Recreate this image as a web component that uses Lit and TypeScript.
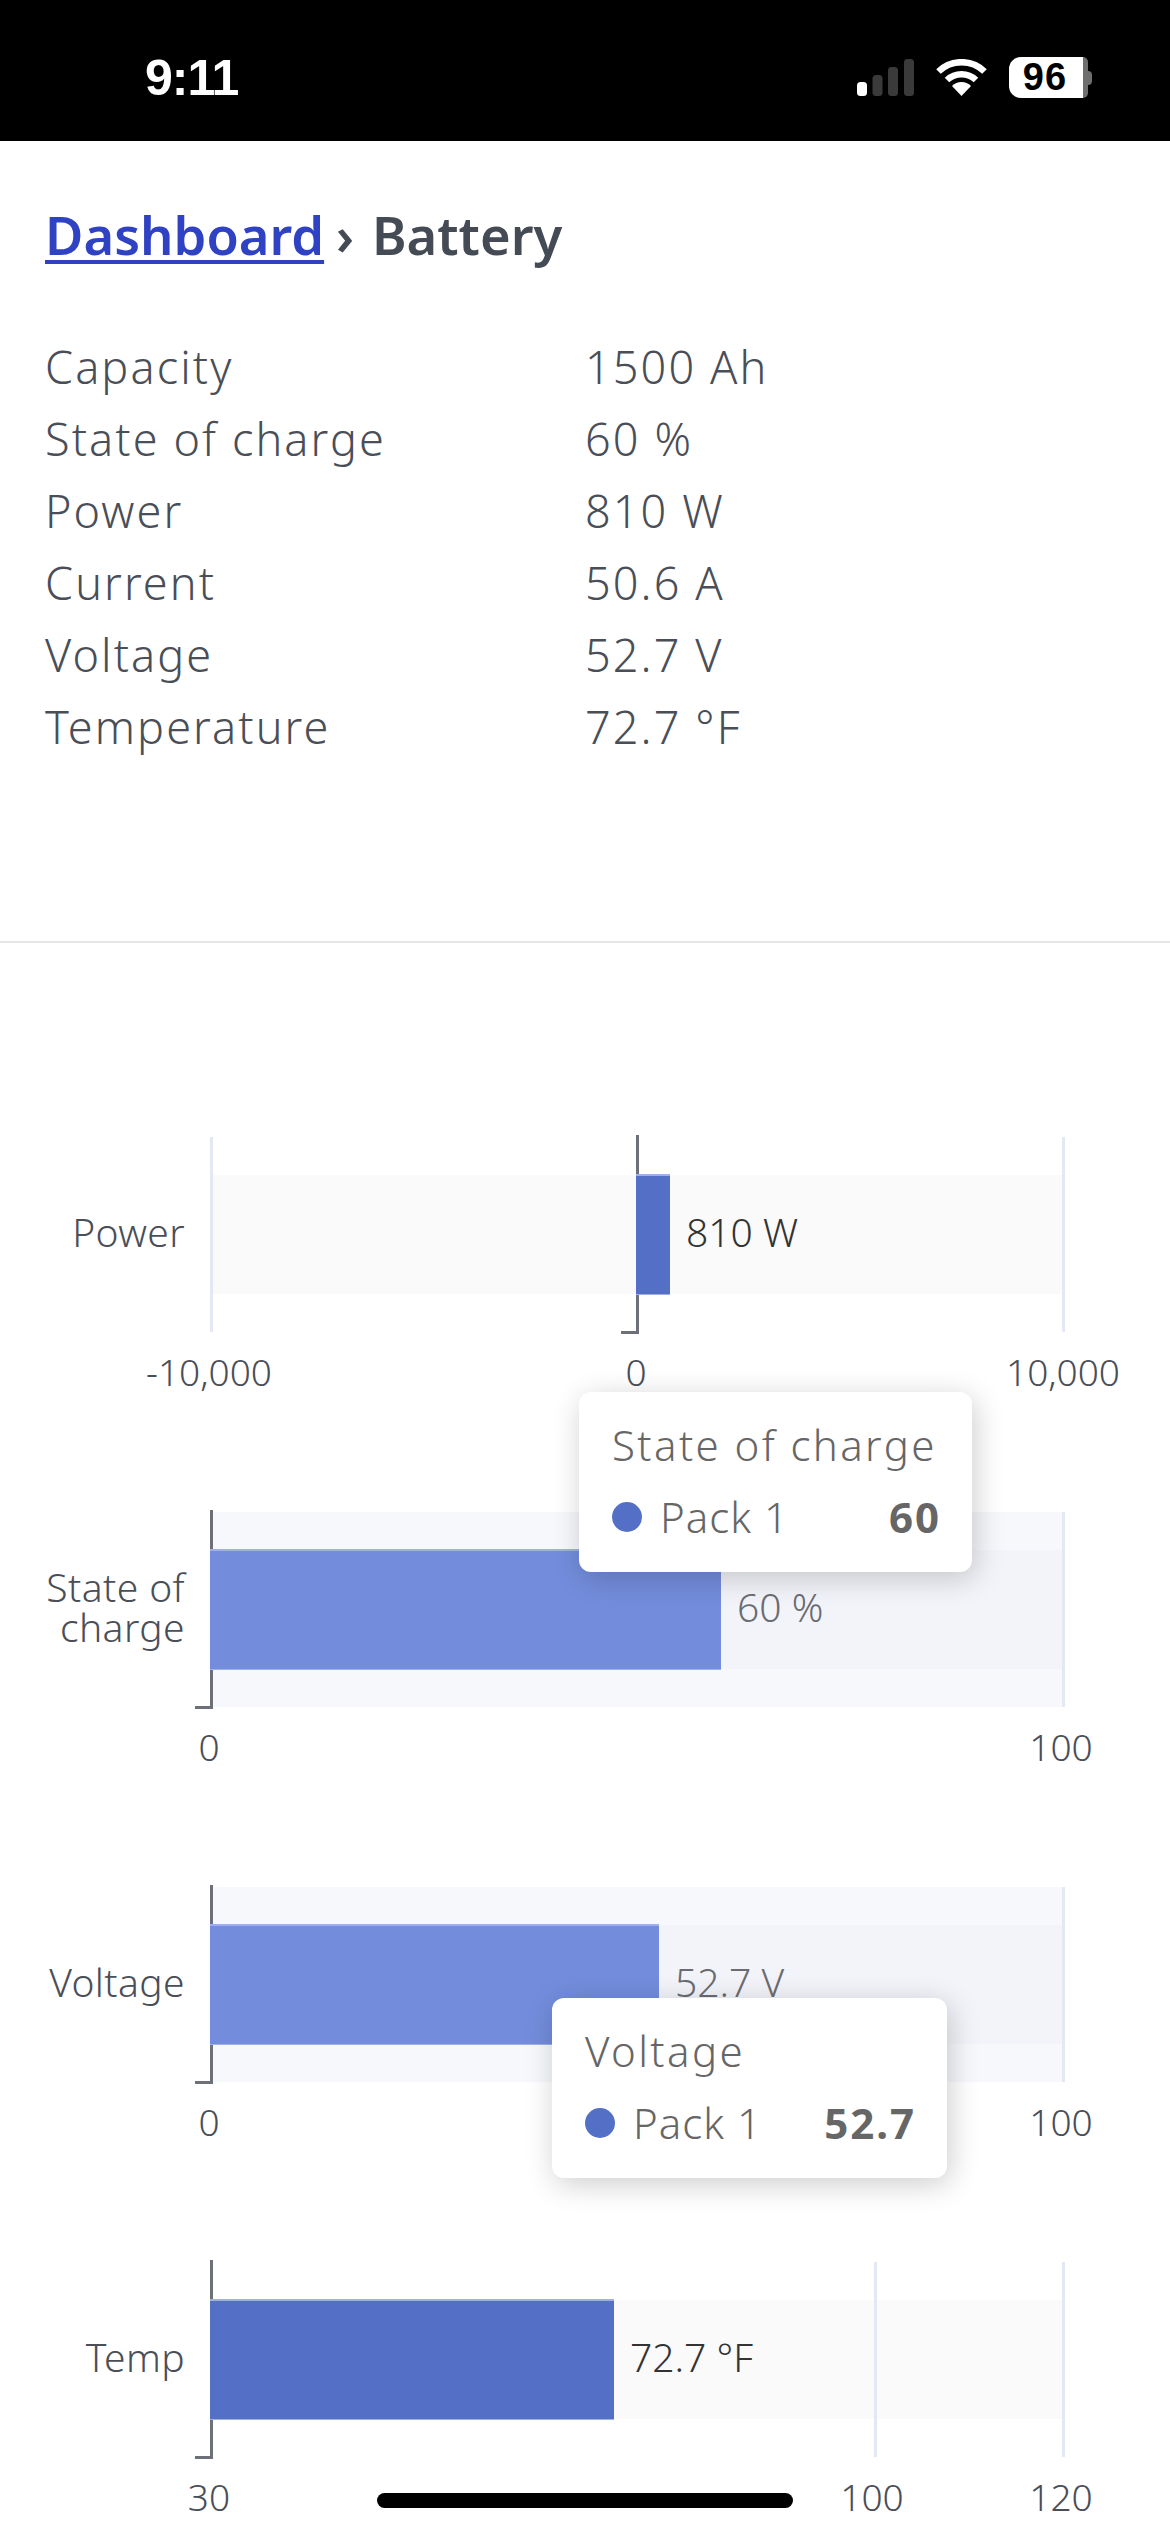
import { LitElement, html, css, svg } from "lit";
import { customElement } from "lit/decorators.js";

type Tip = { title: string; value: string; cls: string };
type Chart = {
  label: string[];
  fill: string;
  outer: boolean;
  x0: number;
  barEnd: number;
  value: string;
  valueCls: string;
  grids: number[];
  ticks: { t: string; x: number }[];
  tip?: Tip;
};

const charts: Chart[] = [
  {
    label: ["Power"], fill: "solid", outer: false, x0: 426, barEnd: 459, value: "810 W", valueCls: "dark", grids: [0, 852],
    ticks: [{ t: "-10,000", x: -2 }, { t: "0", x: 425 }, { t: "10,000", x: 852 }],
  },
  {
    label: ["State of", "charge"], fill: "faded", outer: true, x0: 0, barEnd: 510, value: "60 %", valueCls: "mid", grids: [852],
    ticks: [{ t: "0", x: -2 }, { t: "100", x: 850 }],
    tip: { title: "State of charge", value: "60", cls: "tip1" },
  },
  {
    label: ["Voltage"], fill: "faded", outer: true, x0: 0, barEnd: 448, value: "52.7 V", valueCls: "mid", grids: [852],
    ticks: [{ t: "0", x: -2 }, { t: "100", x: 850 }],
    tip: { title: "Voltage", value: "52.7", cls: "tip2" },
  },
  {
    label: ["Temp"], fill: "solid", outer: false, x0: 0, barEnd: 403, value: "72.7 °F", valueCls: "dark", grids: [664, 852],
    ticks: [{ t: "30", x: -2 }, { t: "100", x: 661 }, { t: "120", x: 850 }],
  },
];

const stats = [
  ["Capacity", "1500 Ah"],
  ["State of charge", "60 %"],
  ["Power", "810 W"],
  ["Current", "50.6 A"],
  ["Voltage", "52.7 V"],
  ["Temperature", "72.7 °F"],
];

@customElement("app-root")
export class AppRoot extends LitElement {
  static styles = css`
    :host {
      display: block;
      width: 1170px;
      height: 2532px;
      position: relative;
      overflow: hidden;
      background: #fff;
      font-family: "Noto Sans", "Open Sans", sans-serif;
      color: #4a4e57;
    }
    .status {
      height: 141px;
      background: #000;
      display: flex;
      align-items: center;
      justify-content: space-between;
      padding: 0 78px 0 145px;
      box-sizing: border-box;
    }
    .time {
      font-family: "Liberation Sans", sans-serif;
      font-weight: 700;
      font-size: 50px;
      letter-spacing: -1px;
      color: #fff;
      line-height: 1;
      margin-top: 14px;
    }
    .icons {
      display: flex;
      align-items: center;
      gap: 22px;
      margin-top: 14px;
    }
    .icons svg { display: block; }
    .batt { display: flex; align-items: center; }
    .batt-body {
      width: 74px;
      height: 41px;
      background: #fff;
      border-radius: 12px 0 0 12px / 12px;
      color: #000;
      font-family: "Liberation Sans", sans-serif;
      font-weight: 700;
      font-size: 38px;
      letter-spacing: 1px;
      line-height: 41px;
      text-align: center;
      box-sizing: border-box;
      padding-right: 2px;
    }
    .batt-end {
      width: 5px;
      height: 41px;
      background: #6e6e6e;
      border-radius: 0 10px 10px 0;
    }
    .batt-nub {
      width: 4px;
      height: 14px;
      background: #6e6e6e;
      border-radius: 0 6px 6px 0;
    }
    .crumb {
      padding: 58px 45px 0;
      font-size: 52.5px;
      font-weight: 600;
      line-height: 72px;
      white-space: nowrap;
      color: #454b54;
    }
    .crumb a {
      color: #3042c4;
      text-decoration: underline;
      text-decoration-thickness: 4px;
      text-underline-offset: 5px;
    }
    .crumb .sep { margin: 0 18px 0 12px; font-size: 52px; }
    .stats {
      margin-top: 60px;
      padding: 0 45px;
      display: grid;
      grid-template-columns: 540px 1fr;
      font-size: 45px;
      font-weight: 300;
      line-height: 72px;
      letter-spacing: 2.1px;
    }
    hr {
      margin: 178px 0 0;
      border: 0;
      height: 2px;
      background: #e6e6e6;
    }
    .charts {
      padding-top: 194px;
      display: flex;
      flex-direction: column;
      gap: 180px;
    }
    .chart {
      display: grid;
      grid-template-columns: 211px 852px;
      grid-template-rows: 195px;
      position: relative;
      height: 195px;
    }
    .label {
      display: flex;
      flex-direction: column;
      align-items: flex-end;
      justify-content: center;
      padding: 0 26px 6px 0;
      font-size: 39px;
      font-weight: 300;
      line-height: 40px;
      letter-spacing: 0.4px;
      color: #4a4e57;
    }
    .plot { position: relative; }
    .plot.outer { background: #f7f8fc; }
    .band {
      position: absolute;
      left: 0;
      right: 0;
      top: 38px;
      height: 119px;
      background: #fafafa;
    }
    .plot.outer .band { background: #f3f4f9; }
    .grid {
      position: absolute;
      top: 0;
      bottom: 0;
      width: 3px;
      margin-left: -1px;
      background: #e4e8f2;
    }
    .bar {
      position: absolute;
      top: 37px;
      height: 121px;
      border-top: 2px solid #9fb0e6;
      border-bottom: 1px solid #9fb0e6;
      box-sizing: border-box;
    }
    .bar.solid { background: #5470c6; }
    .bar.faded { background: #738ddc; }
    .axis {
      position: absolute;
      top: -2px;
      bottom: -2px;
      width: 3px;
      margin-left: -1px;
      background: #6e7079;
    }
    .tick {
      position: absolute;
      left: -15px;
      bottom: 0;
      height: 3px;
      width: 15px;
      background: #6e7079;
    }
    .val {
      position: absolute;
      top: 94px;
      transform: translateY(-50%);
      font-size: 39px;
      font-weight: 300;
      white-space: nowrap;
      margin-left: 16px;
    }
    .val.dark { color: #333; }
    .val.mid { color: #6a6c72; }
    .axlabel {
      position: absolute;
      top: 215px;
      transform: translateX(-50%);
      font-size: 37px;
      font-weight: 300;
      line-height: 40px;
      white-space: nowrap;
      color: #4a4e57;
    }
    .tip {
      position: absolute;
      z-index: 5;
      background: #fff;
      border-radius: 12px;
      box-shadow: 3px 6px 30px rgba(0, 0, 0, 0.2);
      box-sizing: border-box;
      padding: 17px 33px;
      display: flex;
      flex-direction: column;
      color: #666;
      font-size: 42px;
      font-weight: 300;
      line-height: 72px;
      white-space: nowrap;
    }
    .tip.tip1 { left: 368px; top: -120px; width: 393px; height: 180px; }
    .tip.tip2 { left: 341px; top: 111px; width: 395px; height: 180px; }
    .tip-title { letter-spacing: 2.4px; }
    .tip-row { display: flex; align-items: center; letter-spacing: 1px; }
    .dot {
      width: 30px;
      height: 30px;
      border-radius: 50%;
      background: #5470c6;
      margin-right: 18px;
    }
    .tip-val {
      margin-left: auto;
      font-weight: 700;
      letter-spacing: 2px;
      margin-right: -2px;
    }
    .home {
      position: absolute;
      left: 377px;
      top: 2493px;
      width: 416px;
      height: 15px;
      border-radius: 8px;
      background: #000;
      z-index: 9;
    }
  `;

  private chart(c: Chart) {
    return html`<div class="chart">
      <div class="label">${c.label.map((l) => html`<span>${l}</span>`)}</div>
      <div class="plot ${c.outer ? "outer" : ""}">
        <div class="band"></div>
        ${c.grids.map((g) => html`<div class="grid" style="left:${g}px"></div>`)}
        <div class="axis" style="left:${c.x0}px"><div class="tick"></div></div>
        <div class="bar ${c.fill}" style="left:${c.x0 - 1}px;width:${c.barEnd - c.x0 + 1}px"></div>
        <div class="val ${c.valueCls}" style="left:${c.barEnd}px">${c.value}</div>
        ${c.ticks.map((t) => html`<div class="axlabel" style="left:${t.x}px">${t.t}</div>`)}
        ${c.tip
          ? html`<div class="tip ${c.tip.cls}">
              <div class="tip-title">${c.tip.title}</div>
              <div class="tip-row"><span class="dot"></span><span>Pack 1</span><span class="tip-val">${c.tip.value}</span></div>
            </div>`
          : ""}
      </div>
    </div>`;
  }

  render() {
    return html`
      <div class="status">
        <div class="time">9:11</div>
        <div class="icons">
          <svg width="57" height="37" viewBox="0 0 57 37">
            <rect x="0" y="23" width="10" height="14" rx="3.5" fill="#fff" />
            <rect x="15.5" y="16" width="10" height="21" rx="3.5" fill="#3a3a3a" />
            <rect x="31" y="8" width="10" height="29" rx="3.5" fill="#3a3a3a" />
            <rect x="47" y="0" width="10" height="37" rx="3.5" fill="#3a3a3a" />
          </svg>
          <svg width="51" height="37" viewBox="0 0 51 37">
            ${svg`<path d="M2.5 12.5 A33 33 0 0 1 48.5 12.5" fill="none" stroke="#fff" stroke-width="6.5"/>
            <path d="M11 21 A21 21 0 0 1 40 21" fill="none" stroke="#fff" stroke-width="6.5"/>
            <path d="M25.5 37 L16 27 A13.5 13.5 0 0 1 35 27 Z" fill="#fff"/>`}
          </svg>
          <div class="batt">
            <div class="batt-body">96</div>
            <div class="batt-end"></div>
            <div class="batt-nub"></div>
          </div>
        </div>
      </div>
      <div class="crumb"><a>Dashboard</a><span class="sep">›</span>Battery</div>
      <div class="stats">
        ${stats.map(([k, v]) => html`<div>${k}</div><div>${v}</div>`)}
      </div>
      <hr />
      <div class="charts">${charts.map((c) => this.chart(c))}</div>
      <div class="home"></div>
    `;
  }
}
